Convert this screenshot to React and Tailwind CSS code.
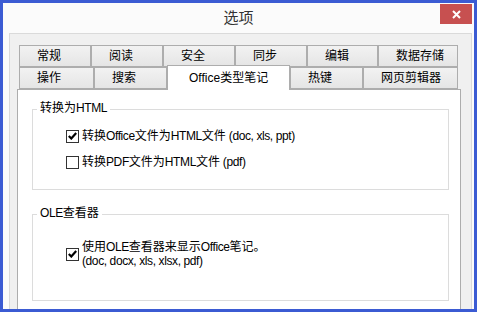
const font = { fontFamily: '"Liberation Sans", "Noto Sans CJK SC", sans-serif' }

const row1 = [
  ['常规', 'w-[72px]'],
  ['阅读', 'w-[72px]'],
  ['安全', 'w-[72px]'],
  ['同步', 'w-[72px]'],
  ['编辑', 'w-[71px]'],
  ['数据存储', 'w-[80px]'],
]

// latin runs render a bit narrower than the CJK in the original dialog
const L = ({ children }) => <span className="tracking-[-0.4px]">{children}</span>

function Tab({ label, w }) {
  return (
    <div className={`${w} h-[22px] flex items-center pl-[17px] border border-[#adadad] bg-gradient-to-b from-[#f2f2f2] to-[#e5e5e5] text-[12px] text-black`}>
      {label}
    </div>
  )
}

function Box({ checked }) {
  return (
    <span className="w-[13px] h-[13px] shrink-0 border border-[#333] bg-white flex items-center justify-center">
      {checked && (
        <svg width="9" height="8" viewBox="0 0 9 8">
          <path d="M0.8 4 L3.3 6.5 L8.2 1" fill="none" stroke="#000" strokeWidth="2.2" />
        </svg>
      )}
    </span>
  )
}

function Group({ title, h, className, children }) {
  return (
    <div className={`${h} ${className} border border-[#dcdcdc]`}>
      <div className="-mt-[9px] ml-[4px] px-[3px] w-fit bg-white leading-[14px] text-[12px] text-black">{title}</div>
      {children}
    </div>
  )
}

export default function App() {
  return (
    <div className="w-[477px] h-[312px] bg-[#3b5bd3] p-[3px]" style={font}>
      <div className="h-[306px] bg-[#fbfbfb] flex flex-col overflow-hidden">
        <div className="h-[30px] shrink-0 relative flex items-center justify-center text-[15px] text-[#333]">
          选项
          <div className="absolute right-[2px] top-[1px] w-[32px] h-[20px] bg-[#c75050] flex items-center justify-center">
            <svg width="9" height="9" viewBox="0 0 9 9">
              <path d="M1 1 L8 8 M8 1 L1 8" stroke="#fff" strokeWidth="2" />
            </svg>
          </div>
        </div>

        <div className="flex-1 ml-[6px] mr-[2px] border border-b-0 border-[#dadada] bg-[#f0f0f0] pt-[11px] pl-[7px] pr-[10px] flex flex-col">
          <div className="px-[2px]">
            <div className="flex">
              {row1.map(([l, w]) => <Tab key={l} label={l} w={w} />)}
            </div>
            <div className="flex items-end h-[22px]">
              <Tab label="操作" w="w-[75px]" />
              <Tab label="搜索" w="w-[73px]" />
              <div className="w-[123px] h-[25px] -mb-px relative z-10 flex items-center pl-[21px] border border-b-0 border-[#adadad] bg-white text-[12px] text-black">
                Office类型笔记
              </div>
              <Tab label="热键" w="w-[73px]" />
              <Tab label="网页剪辑器" w="w-[95px]" />
            </div>
          </div>

          <div className="flex-1 border border-b-0 border-[#adadad] bg-white pl-[14px] pr-[11px]">
            <Group title={<>转换为<L>HTML</L></>} h="h-[81px]" className="mt-[19px]">
              <div className="mt-[14px] ml-[33px] flex items-center gap-[3px] leading-[14px] text-[12px] text-black">
                <Box checked />
                <span>转换<L>Office</L>文件为<L>HTML</L>文件<L> (doc, xls, ppt)</L></span>
              </div>
              <div className="mt-[12px] ml-[33px] flex items-center gap-[3px] leading-[14px] text-[12px] text-black">
                <Box />
                <span>转换<L>PDF</L>文件为<L>HTML</L>文件<L> (pdf)</L></span>
              </div>
            </Group>

            <Group title={<><L>OLE</L>查看器</>} h="h-[87px]" className="mt-[24px]">
              <div className="mt-[20px] ml-[33px] flex items-center gap-[3px] leading-[14px] text-[12px] text-black">
                <Box checked />
                <div>
                  <div>使用<L>OLE</L>查看器来显示<L>Office</L>笔记。</div>
                  <div><L>(doc, docx, xls, xlsx, pdf)</L></div>
                </div>
              </div>
            </Group>
          </div>
        </div>
      </div>
    </div>
  )
}
